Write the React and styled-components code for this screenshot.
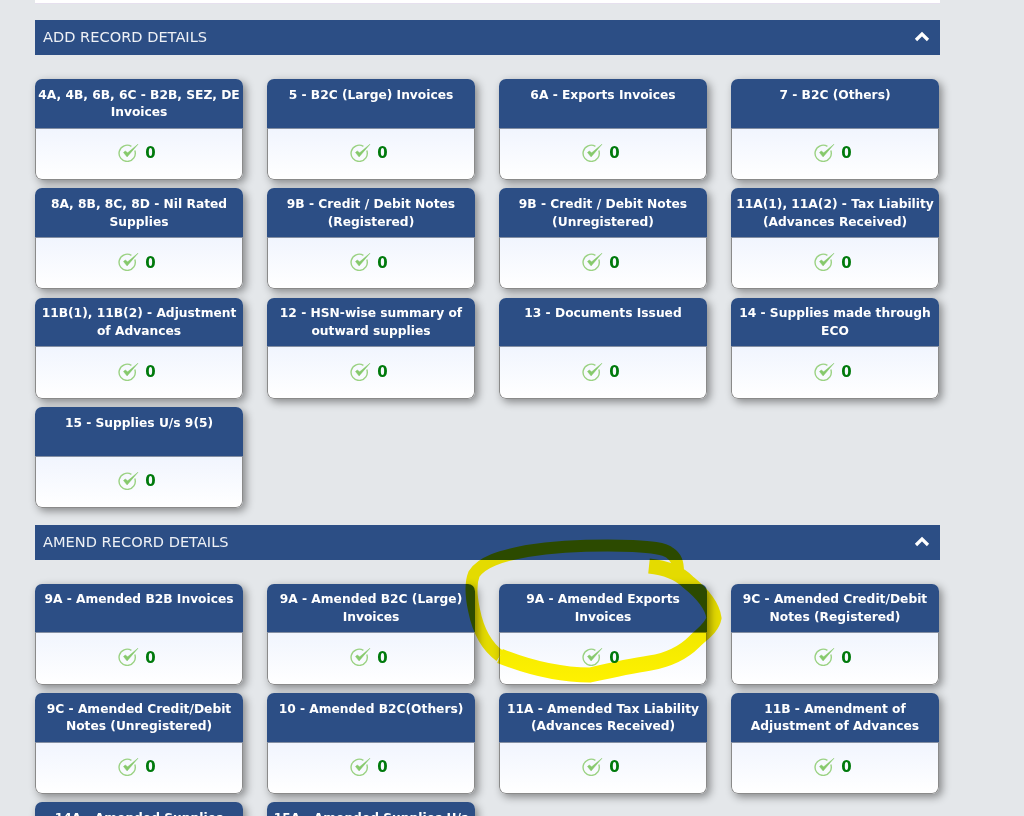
import React from 'react';
import styled, { createGlobalStyle } from 'styled-components';

const GlobalStyle = createGlobalStyle`
  html, body {
    margin: 0;
    padding: 0;
    height: 816px;
    overflow: hidden;
    background: #e4e7ea;
  }
`;

const Page = styled.div`
  position: relative;
  width: 1024px;
  height: 816px;
  overflow: hidden;
  padding: 0 84px 0 35px;
  box-sizing: border-box;
`;

const TopRule = styled.div`
  height: 4px;
  background: #fff;
  border-bottom: 1px solid #e6e0ee;
  box-sizing: border-box;
  margin-bottom: 16px;
`;

const SectionBar = styled.div`
  height: 35px;
  box-sizing: border-box;
  padding: 0 10px 2px 8px;
  background: #2c4e85;
  color: #eef1f6;
  display: flex;
  align-items: center;
  justify-content: space-between;
  font-family: 'DejaVu Sans', Verdana, sans-serif;
  font-size: 14.6px;
`;

const Grid = styled.div`
  display: grid;
  grid-template-columns: repeat(4, 208px);
  column-gap: 24px;
  row-gap: 8.4px;
  padding: 24px 0 16.5px;
`;

const Card = styled.div`
  height: 101px;
  border-radius: 7px;
  overflow: hidden;
  display: flex;
  flex-direction: column;
  box-shadow: 3px 3px 8px rgba(0, 0, 0, 0.42);
`;

const CardHead = styled.div`
  height: 49.5px;
  flex: none;
  box-sizing: border-box;
  background: #2c4e85;
  color: #fff;
  border-bottom: 1px solid #848fa3;
  padding: 7.6px 2px 0;
  text-align: center;
  font-family: 'DejaVu Sans', Verdana, sans-serif;
  font-weight: 700;
  font-size: 12.25px;
  line-height: 17.6px;
`;

const CardBody = styled.div`
  flex: 1;
  display: flex;
  align-items: center;
  justify-content: center;
  gap: 6px;
  padding: 0 4px 3px 0;
  background: linear-gradient(#f1f5fe, #ffffff);
  border: 1px solid #8a8a8a;
  border-top: none;
  border-radius: 0 0 7px 7px;
`;

const Count = styled.span`
  color: #007a0c;
  font-family: 'DejaVu Sans', Verdana, sans-serif;
  font-weight: 700;
  font-size: 15px;
  margin-top: 2px;
`;

const Scribble = styled.svg`
  position: absolute;
  left: 0;
  top: 0;
  mix-blend-mode: multiply;
  pointer-events: none;
`;

const CheckIcon = () => (
  <svg width="21" height="19" viewBox="0 0 21 19" fill="none">
    <path
      d="M16.8 7.6a8.1 8.1 0 1 1-3.4-4.2"
      stroke="#9bd283"
      strokeWidth="1.4"
    />
    <path
      d="M5.5 9.5l3.6 4.4L20 1.2 9.7 9.8 7.2 8z"
      fill="#86c96c"
      stroke="#86c96c"
      strokeWidth="0.5"
      strokeLinejoin="round"
    />
  </svg>
);

const Chevron = () => (
  <svg width="16" height="11" viewBox="0 0 16 11" fill="none">
    <path d="M2 9l6-6 6 6" stroke="#fff" strokeWidth="3.2" />
  </svg>
);

const addRecords = [
  '4A, 4B, 6B, 6C - B2B, SEZ, DE Invoices',
  '5 - B2C (Large) Invoices',
  '6A - Exports Invoices',
  '7 - B2C (Others)',
  '8A, 8B, 8C, 8D - Nil Rated Supplies',
  '9B - Credit / Debit Notes (Registered)',
  '9B - Credit / Debit Notes (Unregistered)',
  '11A(1), 11A(2) - Tax Liability (Advances Received)',
  '11B(1), 11B(2) - Adjustment of Advances',
  '12 - HSN-wise summary of outward supplies',
  '13 - Documents Issued',
  '14 - Supplies made through ECO',
  '15 - Supplies U/s 9(5)',
];

const amendRecords = [
  '9A - Amended B2B Invoices',
  '9A - Amended B2C (Large) Invoices',
  '9A - Amended Exports Invoices',
  '9C - Amended Credit/Debit Notes (Registered)',
  '9C - Amended Credit/Debit Notes (Unregistered)',
  '10 - Amended B2C(Others)',
  '11A - Amended Tax Liability (Advances Received)',
  '11B - Amendment of Adjustment of Advances',
  '14A - Amended Supplies made through ECO',
  '15A - Amended Supplies U/s 9(5)',
];

const Section = ({ title, records }) => (
  <section>
    <SectionBar>
      {title}
      <Chevron />
    </SectionBar>
    <Grid>
      {records.map((name) => (
        <Card key={name}>
          <CardHead>{name}</CardHead>
          <CardBody>
            <CheckIcon />
            <Count>0</Count>
          </CardBody>
        </Card>
      ))}
    </Grid>
  </section>
);

export default function App() {
  return (
    <Page>
      <GlobalStyle />
      <TopRule />
      <Section title="ADD RECORD DETAILS" records={addRecords} />
      <Section title="AMEND RECORD DETAILS" records={amendRecords} />
      <Scribble width="1024" height="816" viewBox="0 0 1024 816" fill="none">
        {/* top and left of the marker ring are thinner than the bottom */}
        <path
          d="M678 572C678 562 676 557 670 553C664 548 650 547 633 546C600 545 560 546 527 551C500 556 482 562 474 574C470 584 471 596 474 610C478 630 486 646 500 656"
          stroke="#fff200"
          strokeWidth="12"
        />
        <path
          d="M649 566C668 568 680 574 688 582C698 590 712 604 714 618C712 628 702 634 694 642C682 654 668 660 650 663C630 666 612 670 590 675C560 675 530 668 500 656"
          stroke="#fff200"
          strokeWidth="15"
        />
      </Scribble>
    </Page>
  );
}
